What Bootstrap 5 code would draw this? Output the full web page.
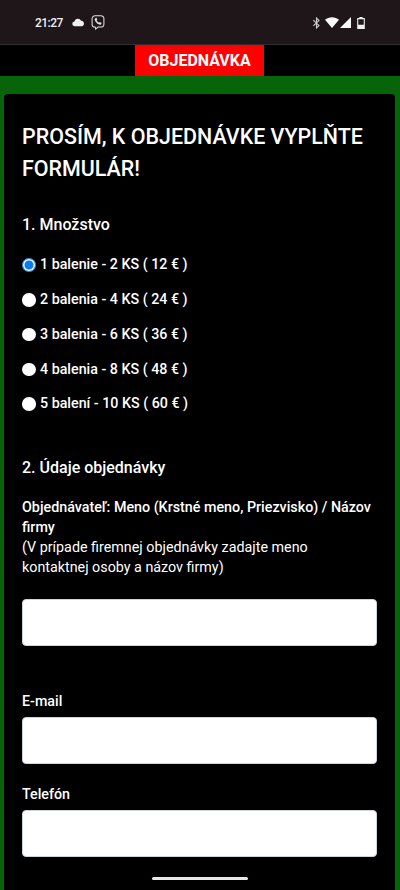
<!DOCTYPE html>
<html lang="sk">
<head>
<meta charset="utf-8">
<title>Objednávka</title>
<link rel="stylesheet" href="https://cdn.jsdelivr.net/npm/bootstrap@5.3.0/dist/css/bootstrap.min.css">
<style>
html,body{height:890px;overflow:hidden;background:#000;}
body{font-family:Roboto,"Liberation Sans",sans-serif;color:#fff;}
.stat-bar{height:45px;background:#1e1619;border-bottom:1px solid #332c2e;padding:1px 35px 0 35px;font-size:12px;font-weight:500;color:#f1eff0;letter-spacing:-.55px;}
.ic-gap{margin-left:6px;}
.ic-first{margin-left:9px;}
.ic-sig{margin-left:1px;}
.title-row{height:31px;background:#000;padding-right:1px;}
.title-tab{width:129px;height:31px;background:#fe0000;color:#fff;font-size:16px;font-weight:700;}
.green-wrap{background:#086408;padding:18px 5px 0 4px;height:814px;}
.form-panel{background:#000;border-radius:4px 4px 0 0;height:796px;padding:27px 18px 0 18px;overflow:hidden;}
.form-title{font-size:21.450px;line-height:32px;font-weight:500;margin:0 0 28px;}
.sec-title{font-size:16px;line-height:24px;font-weight:500;margin:0;}
.qty-list{margin-top:10.600px;}
.qty-row{height:34.8px;font-size:14.270px;font-weight:500;}
.qty-row .form-check-input{width:13.500px;height:13.500px;margin:0 4.500px 0 0;border:0;background-color:#fff;flex:none;}
.qty-row .form-check-input:checked{background-color:#0d7bf0;background-image:none;border:1px solid #3d8fe8;box-shadow:inset 0 0 0 1.5px #fff;}
.sec2{margin-top:34.400px;}
.lbl-long{font-size:14.300px;line-height:20px;margin:17px 0 0;padding:0 0 22px 0;}
.lbl-long b{font-weight:500;}
.fld{height:47px;background:#fff;border:1px solid #ced4da;border-radius:4px;}
.lbl-short{font-size:14.270px;line-height:20px;font-weight:500;margin:0 0 6px;}
.lbl-mail{margin-top:45.500px;}
.fld-gap{margin-bottom:19.500px;}
.home-pill{position:absolute;left:152px;top:877px;width:96px;height:3px;border-radius:2px;background:#e8e8e8;}
</style>
</head>
<body class="position-relative">
<div class="stat-bar d-flex align-items-center justify-content-between">
  <div class="d-flex align-items-center">
    <span>21:27</span>
    <svg class="ic-first" width="13" height="9" viewBox="0 0 14 9"><path fill="#f1eff0" d="M3 8.500A2.500 2.500 0 0 1 2.600 3.500 3.800 3.800 0 0 1 9.800 2.700 3 3 0 0 1 11 8.500Z"/></svg>
    <svg class="ic-gap" width="14" height="15" viewBox="0 0 14 16"><path fill="none" stroke="#e4e1e2" stroke-width="1.100" d="M4 12.800H3.500C1.800 12.800 .7 11.900 .7 10V4C.7 2 2 .7 4 .7H10C12 .7 13.300 2 13.300 4V9.500C13.300 11.800 12 12.800 10 12.800H7L4.500 15Z"/><path fill="#e4e1e2" d="M4 3.400 5.300 3 6.300 4.900 5.500 5.700C6 6.900 6.900 7.800 8.100 8.300L8.900 7.500 10.800 8.500 10.400 9.800C10 10.400 9.300 10.400 8.600 10.200 6 9.400 4.300 7.500 3.500 5 3.300 4.300 3.400 3.800 4 3.400Z"/></svg>
  </div>
  <div class="d-flex align-items-center">
    <svg width="9" height="12" viewBox="0 0 8 12" fill="none" stroke="#cfcccd" stroke-width="1.100"><path d="M.8 3.200 6.500 8.500 4 11V1L6.500 3.500.8 8.800"/></svg>
    <svg class="ms-1" width="14" height="11" viewBox="0 0 14 11"><path fill="#f8f8f8" d="M0 2.800C3.800-.6 10.200-.6 14 2.800L7 11Z"/></svg>
    <svg class="ic-sig" width="11" height="11" viewBox="0 0 11 11"><path fill="#f8f8f8" d="M11 0V11H0Z"/></svg>
    <svg class="ic-gap" width="8" height="12" viewBox="0 0 7 11"><path fill="#f1eff0" fill-rule="evenodd" d="M2 0H5V1H7V11H0V1H2ZM1 2V7H6V2Z"/></svg>
  </div>
</div>
<div class="title-row d-flex justify-content-center">
  <div class="title-tab d-flex align-items-center justify-content-center">OBJEDNÁVKA</div>
</div>
<div class="green-wrap">
  <div class="form-panel">
    <h1 class="form-title">PROSÍM, K OBJEDNÁVKE VYPLŇTE FORMULÁR!</h1>
    <h2 class="sec-title">1. Množstvo</h2>
    <div class="qty-list">
      <div class="qty-row d-flex align-items-center"><input class="form-check-input" type="radio" name="q" checked><span>1 balenie - 2 KS ( 12 € )</span></div>
      <div class="qty-row d-flex align-items-center"><input class="form-check-input" type="radio" name="q"><span>2 balenia - 4 KS ( 24 € )</span></div>
      <div class="qty-row d-flex align-items-center"><input class="form-check-input" type="radio" name="q"><span>3 balenia - 6 KS ( 36 € )</span></div>
      <div class="qty-row d-flex align-items-center"><input class="form-check-input" type="radio" name="q"><span>4 balenia - 8 KS ( 48 € )</span></div>
      <div class="qty-row d-flex align-items-center"><input class="form-check-input" type="radio" name="q"><span>5 balení - 10 KS ( 60 € )</span></div>
    </div>
    <h2 class="sec-title sec2">2. Údaje objednávky</h2>
    <p class="lbl-long"><b>Objednávateľ: Meno (Krstné meno, Priezvisko) / Názov firmy</b><br>(V prípade firemnej objednávky zadajte meno kontaktnej osoby a názov firmy)</p>
    <div class="fld"></div>
    <div class="lbl-short lbl-mail">E-mail</div>
    <div class="fld fld-gap"></div>
    <div class="lbl-short">Telefón</div>
    <div class="fld"></div>
  </div>
</div>
<div class="home-pill"></div>
</body>
</html>
